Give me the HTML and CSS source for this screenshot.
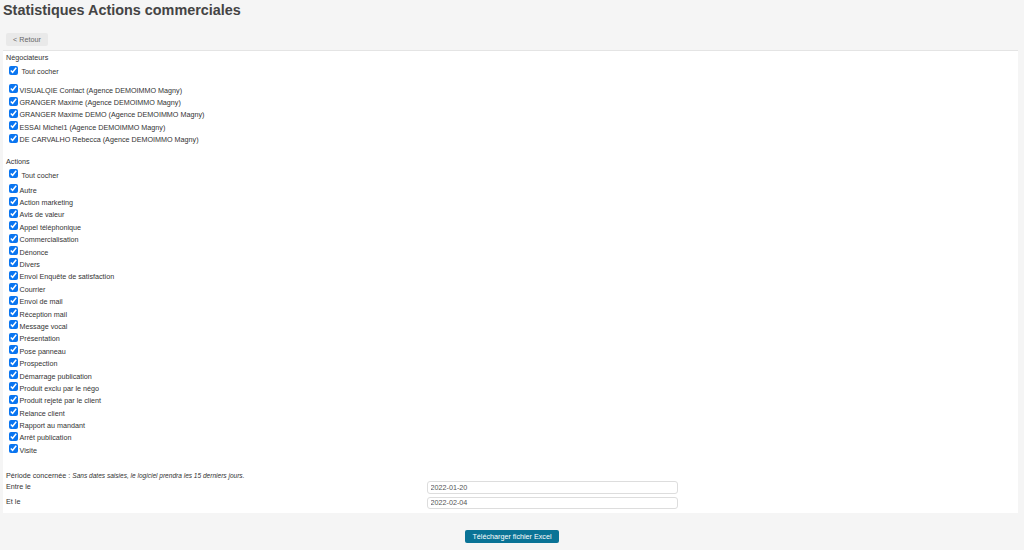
FILE: index.html
```html
<!DOCTYPE html>
<html lang="fr">
<head>
    <meta charset="UTF-8">
    <title>Statistiques Actions commerciales</title>
    <link rel="stylesheet" href="styles.css">
</head>
<body>
<h1>Statistiques Actions commerciales</h1>
<div class="toolbar"><button type="button" class="btn-back">&lt; Retour</button></div>
<form class="panel">
    <div class="group-title">Négociateurs</div>
    <label class="check-all"><input type="checkbox" checked> Tout cocher</label>
    <div class="list list-nego">
        <label><input type="checkbox" checked>VISUALQIE Contact (Agence DEMOIMMO Magny)</label>
        <label><input type="checkbox" checked>GRANGER Maxime (Agence DEMOIMMO Magny)</label>
        <label><input type="checkbox" checked>GRANGER Maxime DEMO (Agence DEMOIMMO Magny)</label>
        <label><input type="checkbox" checked>ESSAI Michel1 (Agence DEMOIMMO Magny)</label>
        <label><input type="checkbox" checked>DE CARVALHO Rebecca (Agence DEMOIMMO Magny)</label>
    </div>
    <div class="group-title group-actions">Actions</div>
    <label class="check-all"><input type="checkbox" checked> Tout cocher</label>
    <div class="list">
        <label><input type="checkbox" checked>Autre</label>
        <label><input type="checkbox" checked>Action marketing</label>
        <label><input type="checkbox" checked>Avis de valeur</label>
        <label><input type="checkbox" checked>Appel téléphonique</label>
        <label><input type="checkbox" checked>Commercialisation</label>
        <label><input type="checkbox" checked>Dénonce</label>
        <label><input type="checkbox" checked>Divers</label>
        <label><input type="checkbox" checked>Envoi Enquête de satisfaction</label>
        <label><input type="checkbox" checked>Courrier</label>
        <label><input type="checkbox" checked>Envoi de mail</label>
        <label><input type="checkbox" checked>Réception mail</label>
        <label><input type="checkbox" checked>Message vocal</label>
        <label><input type="checkbox" checked>Présentation</label>
        <label><input type="checkbox" checked>Pose panneau</label>
        <label><input type="checkbox" checked>Prospection</label>
        <label><input type="checkbox" checked>Démarrage publication</label>
        <label><input type="checkbox" checked>Produit exclu par le négo</label>
        <label><input type="checkbox" checked>Produit rejeté par le client</label>
        <label><input type="checkbox" checked>Relance client</label>
        <label><input type="checkbox" checked>Rapport au mandant</label>
        <label><input type="checkbox" checked>Arrêt publication</label>
        <label><input type="checkbox" checked>Visite</label>
    </div>
    <div class="period">Période concernée : <em>Sans dates saisies, le logiciel prendra les 15 derniers jours.</em></div>
    <div class="date-row">
        <span class="date-label">Entre le</span>
        <input type="text" class="date-input" value="2022-01-20">
    </div>
    <div class="date-row">
        <span class="date-label">Et le</span>
        <input type="text" class="date-input" value="2022-02-04">
    </div>
</form>
<div class="actions"><button type="button" class="btn-excel">Télécharger fichier Excel</button></div>
</body>
</html>
```

FILE: styles.css
```css
html {
    height: 100%;
}
body {
    margin: 0;
    min-height: 100%;
    background: #f5f5f5;
    font-family: "Liberation Sans", Arial, sans-serif;
    font-size: 7.2px;
    color: #333;
    overflow: hidden;
}
h1 {
    margin: 0;
    padding: 1px 0 0 3px;
    height: 21px;
    font-size: 14.4px;
    line-height: 18px;
    font-weight: bold;
    color: #444;
}
.toolbar {
    padding: 11px 0 0 6px;
    height: 17px;
}
.btn-back {
    display: block;
    height: 13px;
    width: 42px;
    padding: 0;
    border: none;
    border-radius: 2px;
    background: #e9e9e9;
    color: #666;
    font: 7.2px "Liberation Sans", Arial, sans-serif;
}
.panel {
    margin: 0 6px 0 3px;
    height: 463px;
    box-sizing: border-box;
    padding: 3px 0 0 3px;
    background: #fff;
    border-top: 1px solid #e4e4e4;
}
.group-title {
    height: 8px;
    line-height: 8px;
}
.group-actions {
    margin-top: 12px;
}
label {
    display: flex;
    align-items: center;
    height: 12.4px;
}
input[type="checkbox"] {
    width: 9px;
    height: 9px;
    margin: -3px 1.5px 0 3px;
    accent-color: #0a75f0;
}
.check-all {
    margin-top: 1.5px;
    height: 16px;
    gap: 2px;
}
.list {
    margin-top: 0.5px;
}
.list-nego {
    margin-top: 4.5px;
}
.period {
    margin-top: 14px;
    height: 10px;
    line-height: 10px;
}
.period em {
    font-size: 6.55px;
}
.date-row {
    display: flex;
    align-items: flex-start;
    height: 15.5px;
}
.date-label {
    width: 420.5px;
    line-height: 11px;
}
.date-input {
    box-sizing: border-box;
    width: 251px;
    height: 12.5px;
    margin-top: 0.5px;
    padding: 0 3px;
    border: 1px solid #ddd;
    border-radius: 3px;
    color: #555;
    font: 7.2px "Liberation Sans", Arial, sans-serif;
}
.actions {
    display: flex;
    justify-content: center;
    padding-top: 17px;
}
.btn-excel {
    height: 13px;
    width: 94px;
    padding: 0;
    border: none;
    border-radius: 2px;
    background: #0a7396;
    color: #fff;
    font: 7.2px "Liberation Sans", Arial, sans-serif;
}
```
